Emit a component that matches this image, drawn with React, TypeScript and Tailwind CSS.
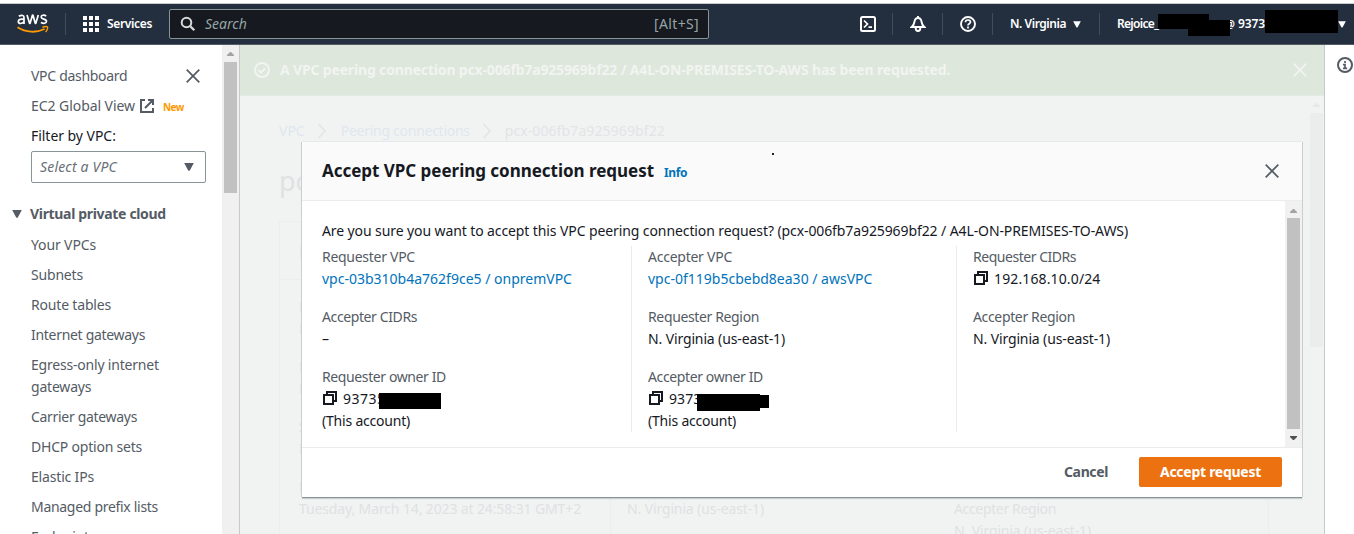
import type { ReactNode } from 'react';

const Close = ({ className }: { className: string }) => (
  <svg className={className} width="14" height="14" viewBox="0 0 14 14" fill="none" stroke="currentColor" strokeWidth="1.7">
    <path d="M.7.7l12.6 12.6M13.3.7L.7 13.3" />
  </svg>
);

const Copy = () => (
  <svg className="mr-[6px] ml-px mt-[3px] shrink-0" width="14" height="14" viewBox="0 0 14 14" fill="none" stroke="#16191f" strokeWidth="2">
    <path d="M1 4h9v9H1zM4 4V1h9v9h-3" />
  </svg>
);

const Caret = ({ className }: { className: string }) => (
  <svg className={className} width="10" height="8" viewBox="0 0 10 8" fill="currentColor">
    <path d="M.2 0h9.6L5.8 7.4Q5 8.2 4.2 7.4z" />
  </svg>
);

const Up = ({ className }: { className: string }) => (
  <svg className={className} width="7" height="4" viewBox="0 0 7 4" fill="currentColor">
    <path d="M3 0h1l3 3v1H0V3z" />
  </svg>
);

const Chevron = () => (
  <svg className="text-[#e3e5e5]" width="10" height="16" viewBox="0 0 10 16" fill="none" stroke="currentColor" strokeWidth="1.7">
    <path d="M1.5 1l6.5 7-6.5 7" />
  </svg>
);

function TopBar() {
  return (
    <header className="flex h-[42px] shrink-0 items-center border-t border-b border-t-[#c9cbce] border-b-[#545b64] bg-[#232f3e] text-xs font-semibold text-white">
      <svg className="ml-[17px]" width="32" height="20" viewBox="0 0 32 20">
        <g fill="none" stroke="#fff" strokeWidth="1.7" strokeLinejoin="round">
          <path d="M1.8 2.1Q7 .2 7 3.6V10M7 5.3C4.3 4.8 1.3 5.1 1.3 7.5 1.3 10.2 5.2 10 7 7.7" />
          <path d="M10 .9l2.6 8.4h.5L15.5 1h.4l2.4 8.3h.5L21.3.9" />
          <path d="M29.3 1.9C26.8.7 24.2 1.1 24.2 3c0 2.6 5.3 1.6 5.3 4.3 0 2.2-3 2.5-5.6 1.2" />
        </g>
        <path d="M.5 13.3C9 18.7 19.5 18.9 27.6 15" fill="none" stroke="#f90" strokeWidth="1.9" />
        <path d="M25.3 13.4c2-.9 4.5-.9 5.2-.5.5.8-.2 3.3-1.9 5" fill="none" stroke="#f90" strokeWidth="1.4" />
      </svg>
      <div className="ml-4 h-[22px] w-px bg-[#414d5c]" />
      <svg className="ml-[17px]" width="16" height="16" viewBox="0 0 16 16" fill="#fff">
        <path d="M0 0h4v4H0zM6 0h4v4H6zM12 0h4v4h-4zM0 6h4v4H0zM6 6h4v4H6zM12 6h4v4h-4zM0 12h4v4H0zM6 12h4v4H6zM12 12h4v4h-4z" />
      </svg>
      <span className="ml-2 w-[45px] tracking-[-0.35px]">Services</span>
      <div className="ml-[17px] flex h-[30px] w-[540px] items-center rounded-[2px] border border-[#879596] bg-[#16191f] pr-[9px] pl-[10px] text-sm font-normal text-[#95a5a6]">
        <svg width="16" height="16" viewBox="0 0 16 16" fill="none" stroke="#d5dbdb" strokeWidth="2">
          <circle cx="6.5" cy="6.5" r="4.8" />
          <path d="M10 10l4.3 4.3" strokeWidth="2.3" />
        </svg>
        <span className="ml-[9px] grow italic">Search</span>
        <span className="tracking-[0.35px]">[Alt+S]</span>
      </div>
      <svg className="ml-[151px]" width="16" height="16" viewBox="0 0 16 16" fill="none" stroke="#fff" strokeWidth="2">
        <rect x="1" y="1" width="14" height="14" rx="1.5" />
        <path d="M4 4.5L7.5 8 4 11.5M8.5 11.2H12" strokeWidth="1.7" />
      </svg>
      <div className="ml-4 h-[22px] w-px bg-[#414d5c]" />
      <svg className="ml-[17px]" width="16" height="16" viewBox="0 0 16 16" fill="none" stroke="#fff" strokeWidth="1.9">
        <path d="M8 0v2M1.7 11h12.6C12.2 9.4 12 8.5 11.6 6 11.2 3.3 10 2 8 2S4.8 3.3 4.4 6C4 8.5 3.8 9.4 1.7 11zM5.7 12c0 4 4.6 4 4.6 0" />
      </svg>
      <div className="ml-4 h-[22px] w-px bg-[#414d5c]" />
      <svg className="ml-[17px]" width="16" height="16" viewBox="0 0 16 16" fill="none" stroke="#fff" strokeWidth="1.9">
        <circle cx="8" cy="8" r="7" />
        <path d="M5.5 6.3c0-3.1 5-3 5-.2 0 1.7-2.5 1.6-2.5 3.3M8 10.6v1.8" strokeWidth="1.7" />
      </svg>
      <div className="ml-4 h-[22px] w-px bg-[#414d5c]" />
      <span className="ml-[17px] w-[57px] whitespace-nowrap tracking-[-0.45px]">N. Virginia</span>
      <Caret className="ml-[6px] h-[7px] w-2" />
      <div className="ml-[18px] h-[22px] w-px bg-[#414d5c]" />
      <div className="relative ml-[17px] flex h-8 items-center">
        <span className="w-[41px] tracking-[-0.7px]">Rejoice_</span>
        <span className="ml-[67px] w-[10px] text-[11px] tracking-[-1px]">@</span>
        <span className="ml-[3px] w-[27px] tracking-[-0.1px]">9373</span>
        <div className="absolute top-[6px] left-[41px] h-[15px] w-[51px] bg-black" />
        <div className="absolute top-[12px] left-[71px] h-4 w-[42px] bg-black" />
        <div className="absolute top-[2px] left-[148px] h-[23px] w-[73px] bg-black" />
      </div>
      <Caret className="ml-[73px] h-[7px] w-2" />
    </header>
  );
}

const links: [string, string][] = [
  ['Your VPCs', 'tracking-[-0.13px]'],
  ['Subnets', 'tracking-[-0.19px]'],
  ['Route tables', 'tracking-[-0.18px]'],
  ['Internet gateways', 'tracking-[-0.3px]'],
  ['Egress-only internet gateways', 'tracking-[-0.2px]'],
  ['Carrier gateways', 'tracking-[-0.31px]'],
  ['DHCP option sets', 'tracking-[-0.21px]'],
  ['Elastic IPs', 'tracking-[-0.17px]'],
  ['Managed prefix lists', 'tracking-[-0.3px]'],
  ['Endpoints', 'tracking-[-0.2px]'],
];

function Sidebar() {
  return (
    <aside className="flex w-[240px] shrink-0 overflow-hidden border-r border-[#c5cacb] bg-white">
      <nav className="flex h-[520px] w-[222px] flex-col pt-5 pl-[31px] text-[#545b64]">
        <div className="flex h-[22px] items-center justify-between pr-[22px]">
          <span className="tracking-[-0.3px]">VPC dashboard</span>
          <Close className="" />
        </div>
        <div className="mt-2 flex h-[22px] items-center">
          <span className="w-[104px] whitespace-nowrap tracking-[-0.06px]">EC2 Global View</span>
          <svg className="ml-[5px]" width="14" height="14" viewBox="0 0 14 14" fill="none" stroke="currentColor" strokeWidth="2">
            <path d="M5 1H1v12h12V9M8 1h5v5M13 1L5 9" />
          </svg>
          <span className="ml-[9px] pt-[2px] text-[10px] font-bold tracking-[-0.6px] text-[#ff9900]">New</span>
        </div>
        <div className="mt-2 h-[22px] tracking-[-0.04px] text-[#16191f]">Filter by VPC:</div>
        <div className="mt-1 flex h-8 w-[175px] shrink-0 items-center justify-between rounded-[2px] border border-[#879596] pr-[11px] pl-2">
          <span className="tracking-[0.18px] text-[#687078] italic">Select a VPC</span>
          <Caret className="" />
        </div>
        <div className="mt-5 -ml-[19px] flex h-[22px] shrink-0 items-center font-bold tracking-[-0.33px]">
          <Caret className="mr-2" />
          Virtual private cloud
        </div>
        <ul className="mt-[9px] flex flex-col gap-2">
          {links.map(([label, tracking]) => (
            <li key={label} className={`w-[150px] ${tracking}`}>{label}</li>
          ))}
        </ul>
      </nav>
      <div className="flex w-[17px] flex-col items-center bg-[#f0f0f0] pt-[7px]">
        <Up className="text-[#a3a3a3]" />
        <div className="mt-[6px] h-[131px] w-[13px] bg-[#c1c1c1]" />
      </div>
    </aside>
  );
}

function Backdrop() {
  return (
    <div className="flex grow flex-col">
      <div className="flex h-[51px] shrink-0 items-center border-b border-[#e6eae7] bg-[#dde7db] pr-[17px] pl-[14px] font-bold text-[#f1f4f1]">
        <svg width="16" height="16" viewBox="0 0 16 16" fill="none" stroke="currentColor" strokeWidth="2">
          <circle cx="8" cy="8" r="7" />
          <path d="M4.5 8l2.5 2.5 4.3-4.3" />
        </svg>
        <span className="ml-[10px] grow tracking-[-0.16px]">
          A VPC peering connection pcx-006fb7a925969bf22 / A4L-ON-PREMISES-TO-AWS has been requested.
        </span>
        <Close className="" />
      </div>
      <div className="flex grow">
        <div className="w-[1030px] shrink-0 pt-6 pl-[39px] text-[#dfe1e2]">
          <div className="flex h-[22px] items-center text-[#dfe7ee]">
            <span className="mr-3">VPC</span>
            <Chevron />
            <span className="mr-3 ml-[14px] w-[129px] whitespace-nowrap tracking-[-0.27px]">Peering connections</span>
            <Chevron />
            <span className="ml-[13px] tracking-[0.1px] text-[#e2e4e5]">pcx-006fb7a925969bf22</span>
          </div>
          <div className="mt-[21px] h-[36px] text-[27px] leading-[36px] text-[#dfe1e2]">pcx-006fb7a925969bf22</div>
          <div className="mt-[22px] h-[330px] w-[990px] border border-[#ebeeee]">
            <div className="h-[58px] border-b border-[#ebeeee] pt-[16px] pl-[19px] text-lg font-bold">Details</div>
            <div className="flex">
              <div className="h-[260px] w-[331px] shrink-0 border-r border-[#ebeeee] pt-[16px] pl-[19px]">
                <div>Requester owner ID</div>
                <div>N. Virginia</div>
                <div className="mt-4">Requester VPC</div>
                <div>Default</div>
                <div className="mt-4">Status</div>
                <div>Pending</div>
                <div className="mt-4">Expiration time</div>
                <div className="tracking-[-0.13px]">Tuesday, March 14, 2023 at 24:58:31 GMT+2</div>
              </div>
              <div className="w-[343px] shrink-0 pt-[218px] pl-4 tracking-[-0.13px]">N. Virginia (us-east-1)</div>
              <div className="pt-[218px]">
                <div className="tracking-[-0.35px]">Accepter Region</div>
                <div className="tracking-[-0.13px]">N. Virginia (us-east-1)</div>
              </div>
            </div>
          </div>
        </div>
        <div className="ml-[40px] flex w-[13px] flex-col items-center pt-[7px]">
          <Up className="text-[#e6e8e8]" />
          <div className="mt-[6px] h-[234px] w-[13px] bg-[#ebeded]" />
        </div>
      </div>
    </div>
  );
}

function Field({ label, tracking, children }: { label: string; tracking: string; children: ReactNode }) {
  return (
    <div>
      <div className={`text-[#545b64] ${tracking}`}>{label}</div>
      {children}
    </div>
  );
}

function Modal() {
  return (
    <div className="absolute top-[142px] left-[302px] flex h-[355px] w-[1000px] flex-col bg-white text-[#16191f] shadow-[0_1px_0_0_#879596,-1px_0_0_0_#c9cfcf,1px_0_0_0_#c9cfcf,0_-1px_0_0_#e6e9e9,0_2px_1px_0_#c9cfcf]">
      <div className="flex h-[59px] shrink-0 items-center border-b border-[#eaeded] bg-[#fafafa] pr-[23px] pl-5">
        <h2 className="w-[332px] whitespace-nowrap text-[17px] font-bold tracking-[-0.03px]">Accept VPC peering connection request</h2>
        <a className="mt-1 ml-[10px] text-xs font-bold tracking-[-0.4px] text-[#0073bb]">Info</a>
        <Close className="ml-auto text-[#545b64]" />
      </div>
      <div className="flex h-[246px] shrink-0">
        <div className="w-[983px] pt-[19px] pl-5">
          <p className="whitespace-nowrap tracking-[-0.1px]">
            Are you sure you want to accept this VPC peering connection request? (pcx-006fb7a925969bf22 / A4L-ON-PREMISES-TO-AWS)
          </p>
          <div className="mt-1 flex h-[186px]">
            <div className="flex w-[310px] flex-col gap-4 border-r border-[#eaeded]">
              <Field label="Requester VPC" tracking="tracking-[-0.28px]">
                <a className="text-[#0073bb]">vpc-03b310b4a762f9ce5 / onpremVPC</a>
              </Field>
              <Field label="Accepter CIDRs" tracking="tracking-[-0.39px]">–</Field>
              <Field label="Requester owner ID" tracking="tracking-[-0.39px]">
                <div className="relative flex tracking-[0.5px]">
                  <Copy />93735
                  <div className="absolute top-[5px] left-[57px] h-4 w-[62px] bg-black" />
                </div>
                <div className="tracking-[-0.2px]">(This account)</div>
              </Field>
            </div>
            <div className="flex w-[325px] flex-col gap-4 border-r border-[#eaeded] pl-4">
              <Field label="Accepter VPC" tracking="tracking-[-0.25px]">
                <a className="text-[#0073bb]">vpc-0f119b5cbebd8ea30 / awsVPC</a>
              </Field>
              <Field label="Requester Region" tracking="tracking-[-0.36px]">
                <div className="tracking-[-0.13px]">N. Virginia (us-east-1)</div>
              </Field>
              <Field label="Accepter owner ID" tracking="tracking-[-0.38px]">
                <div className="relative flex tracking-[0.1px]">
                  <Copy />9373
                  <div className="absolute top-[6px] left-[49px] h-[17px] w-[63px] bg-black" />
                  <div className="absolute top-[7px] left-[112px] h-[13px] w-[9px] bg-black" />
                </div>
                <div className="tracking-[-0.2px]">(This account)</div>
              </Field>
            </div>
            <div className="flex flex-col gap-4 pl-4">
              <Field label="Requester CIDRs" tracking="tracking-[-0.47px]">
                <div className="flex tracking-[0.13px]"><Copy />192.168.10.0/24</div>
              </Field>
              <Field label="Accepter Region" tracking="tracking-[-0.35px]">
                <div className="tracking-[-0.13px]">N. Virginia (us-east-1)</div>
              </Field>
            </div>
          </div>
        </div>
        <div className="flex w-[17px] flex-col items-center bg-[#f1f1f1] pt-[8px]">
          <Up className="text-[#a3a3a3]" />
          <div className="mt-[5px] h-[211px] w-[13px] bg-[#c1c1c1]" />
          <Up className="mt-[7px] rotate-180 text-[#505050]" />
        </div>
      </div>
      <div className="flex grow items-start justify-end border-t border-[#eaeded] pt-[9px] pr-5 font-bold">
        <button className="mr-[31px] h-[30px] w-[44px] tracking-[-0.37px] text-[#545b64]">Cancel</button>
        <button className="h-[30px] w-[143px] rounded-[2px] bg-[#ec7211] tracking-[-0.27px] text-white">Accept request</button>
      </div>
    </div>
  );
}

export default function App() {
  return (
    <div className="relative flex h-[534px] w-[1354px] flex-col overflow-hidden bg-white pt-[3px] font-['Noto_Sans',sans-serif] text-sm leading-[22px]">
      <TopBar />
      <div className="flex h-[489px]">
        <Sidebar />
        <main className="flex w-[1085px] shrink-0 overflow-hidden border-r border-[#c5cacb] bg-[#f1f3f3]">
          <Backdrop />
        </main>
        <div className="pt-3 pl-3">
          <svg width="16" height="16" viewBox="0 0 16 16" fill="none" stroke="#545b64" strokeWidth="2">
            <circle cx="8" cy="8" r="7" />
            <path d="M8 4v2M6 7.7h2V11M6 11.3h4.2" strokeWidth="1.7" />
          </svg>
        </div>
      </div>
      <Modal />
      <div className="absolute top-[153px] left-[772px] size-[2px] bg-[#222]" />
    </div>
  );
}
